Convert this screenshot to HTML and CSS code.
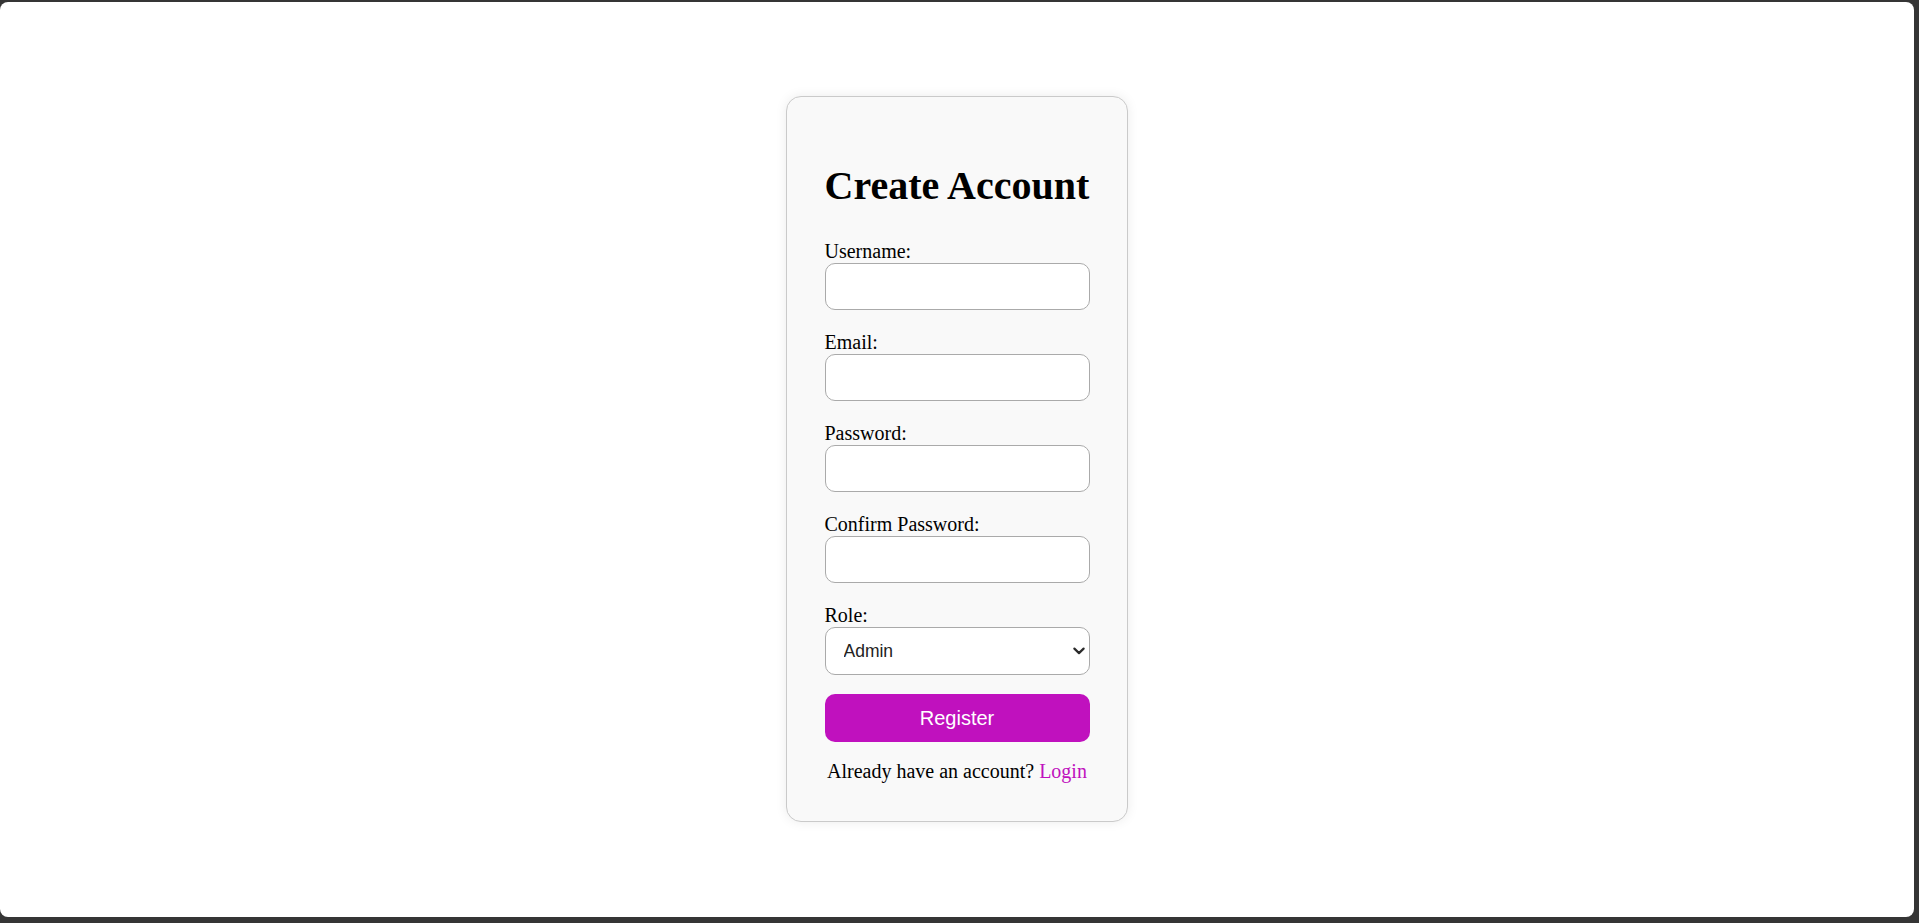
FILE: index.html
```html
<!DOCTYPE html>
<html lang="en">
<head>
<meta charset="utf-8">
<title>Create Account</title>
<link rel="stylesheet" href="styles.css">
</head>
<body>
<div class="screen">
  <main class="page">
    <form class="card">
      <h2 class="title">Create Account</h2>
      <div class="field">
        <label class="label" for="username">Username:</label>
        <input class="control" id="username" type="text">
      </div>
      <div class="field">
        <label class="label" for="email">Email:</label>
        <input class="control" id="email" type="email">
      </div>
      <div class="field">
        <label class="label" for="password">Password:</label>
        <input class="control" id="password" type="password">
      </div>
      <div class="field">
        <label class="label" for="confirm">Confirm Password:</label>
        <input class="control" id="confirm" type="password">
      </div>
      <div class="field field-role">
        <label class="label" for="role">Role:</label>
        <div class="select-wrap">
          <select class="control select" id="role">
            <option>Admin</option>
            <option>User</option>
          </select>
          <svg class="chevron" width="12" height="8" viewBox="0 0 12 8" aria-hidden="true">
            <path d="M1.4 1.6 L6 6.1 L10.6 1.6" fill="none" stroke="#2b2b2b" stroke-width="2.2" stroke-linecap="round" stroke-linejoin="round"/>
          </svg>
        </div>
      </div>
      <button class="btn" type="button">Register</button>
      <p class="alt">Already have an account? <a class="link" href="#">Login</a></p>
    </form>
  </main>
</div>
</body>
</html>
```

FILE: styles.css
```css
html, body {
  margin: 0;
  height: 100%;
}

body {
  background: #353535;
  font-family: "Liberation Serif", "Times New Roman", serif;
  color: #000;
}

.screen {
  height: 100vh;
  box-sizing: border-box;
  padding: 2px 5px 6px 0;
  display: flex;
}

.page {
  flex: 1;
  background: #fff;
  border-radius: 8px;
  display: flex;
  align-items: center;
  justify-content: center;
}

.card {
  width: 265px;
  padding: 37.5px;
  margin-bottom: 2px;
  background: #f9f9f9;
  border: 1px solid #cacaca;
  border-radius: 15px;
  box-shadow: 0 0 12px rgba(0, 0, 0, 0.08);
}

.title {
  font-size: 40px;
  line-height: 46px;
  font-weight: bold;
  margin: 29px 0 30.5px;
  white-space: nowrap;
}

.field {
  margin-bottom: 21px;
}

.field-role {
  margin-bottom: 19.5px;
}

.label {
  display: block;
  font-size: 20px;
  line-height: 23px;
}

.control {
  display: block;
  width: 100%;
  box-sizing: border-box;
  height: 47px;
  margin: 0;
  border: 1px solid #aaa;
  border-radius: 10px;
  background: #fff;
  padding: 0 12px;
  font-family: "Liberation Sans", Arial, sans-serif;
  font-size: 17.5px;
}

.select-wrap {
  position: relative;
}

.select {
  height: 48px;
  color: #222;
  padding-left: 18px;
  padding-right: 24px;
  appearance: none;
  -webkit-appearance: none;
}

.chevron {
  position: absolute;
  right: 5px;
  top: 20px;
  pointer-events: none;
}

.btn {
  display: block;
  width: 100%;
  height: 48px;
  border: none;
  border-radius: 10px;
  background: #c011be;
  color: #fff;
  font-family: "Liberation Sans", Arial, sans-serif;
  font-size: 20px;
  cursor: pointer;
}

.alt {
  margin: 18px 0 0;
  text-align: center;
  font-size: 20px;
  line-height: 23px;
  white-space: nowrap;
}

.link {
  color: #c011be;
  text-decoration: none;
}
```
